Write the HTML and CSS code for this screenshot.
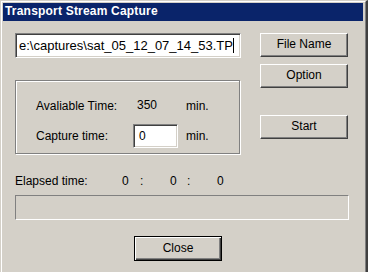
FILE: index.html
```html
<!DOCTYPE html>
<html lang="en">
  <head>
    <meta charset="utf-8">
    <title>Transport Stream Capture</title>
    <link rel="stylesheet" href="styles.css">
  </head>
  <body>
    <div class="window">
      <div class="frame">
        <div class="titlebar">Transport Stream Capture</div>

        <div class="client">
          <div class="toprow">
            <div class="leftcol">
              <div class="edit filename">e:\captures\sat_05_12_07_14_53.TP<span class="caret"></span></div>

              <div class="group">
                <div class="grow">
                  <span class="lbl">Avaliable Time:</span>
                  <span class="val">350</span>
                  <span class="unit">min.</span>
                </div>
                <div class="grow">
                  <span class="lbl">Capture time:</span>
                  <div class="edit small">0</div>
                  <span class="unit">min.</span>
                </div>
              </div>
            </div>

            <div class="rightcol">
              <div class="btn">File Name</div>
              <div class="btn option">Option</div>
              <div class="btn start">Start</div>
            </div>
          </div>

          <div class="elapsed">
            <span class="elabel">Elapsed time:</span>
            <span class="num n1">0</span>
            <span class="sep">:</span>
            <span class="num n2">0</span>
            <span class="sep">:</span>
            <span class="num n3">0</span>
          </div>

          <div class="progress"></div>

          <div class="bottom">
            <div class="btn default">Close</div>
          </div>
        </div>
      </div>
    </div>
  </body>
</html>
```

FILE: styles.css
```css
html, body
{
	margin: 0;
	padding: 0;
	background: #D4D0C8;
}
body
{
	font-family: "Liberation Sans", Arial, sans-serif;
	font-size: 12px;
	color: #000;
}
.window
{
	width: 368px;
	height: 272px;
	box-sizing: border-box;
	border-top: 1px solid #D4D0C8;
	border-left: 1px solid #D4D0C8;
	border-right: 2px solid #404040;
	overflow: hidden;
}
.frame
{
	height: 300px;
	border-top: 1px solid #FFF;
	border-left: 1px solid #FFF;
	border-right: 1px solid #808080;
	padding: 1px;
}
.titlebar
{
	height: 18px;
	background: #0A246A;
	color: #FFF;
	font-weight: bold;
	font-size: 12px;
	letter-spacing: 0.2px;
	line-height: 17px;
	padding-left: 2px;
	margin-right: 1px;
}
.client
{
	padding: 12px 0 0 12px;
}

.toprow
{
	display: flex;
}
.leftcol
{
	width: 226px;
}
.rightcol
{
	margin-left: 19px;
	display: flex;
	flex-direction: column;
}

.edit
{
	box-sizing: border-box;
	background: #FFF;
	border-top: 1px solid #808080;
	border-left: 1px solid #808080;
	border-bottom: 1px solid #FFF;
	border-right: 1px solid #FFF;
	box-shadow: inset 1px 1px 0 #404040, inset -1px -1px 0 #D4D0C8;
	white-space: nowrap;
	overflow: hidden;
}
.filename
{
	height: 25px;
	font-size: 13px;
	line-height: 23px;
	padding-left: 3px;
}
.caret
{
	display: inline-block;
	width: 1px;
	height: 15px;
	background: #000;
	vertical-align: -3px;
}
.small
{
	width: 45px;
	height: 24px;
	margin-left: -4px;
	padding: 4px 0 0 5px;
	line-height: 14px;
}

.group
{
	box-sizing: border-box;
	margin-top: 22px;
	width: 225px;
	height: 74px;
	border: 1px solid #808080;
	box-shadow: inset 1px 1px 0 #FFF, 1px 1px 0 #FFF;
	padding: 13px 0 0 20px;
}
.grow
{
	display: flex;
	align-items: center;
	height: 24px;
}
.grow + .grow
{
	margin-top: 6px;
}
.lbl
{
	width: 101px;
}
.val
{
	width: 49px;
	margin-top: -3px;
}
.grow .small + .unit
{
	margin-left: 8px;
}

.btn
{
	box-sizing: border-box;
	width: 88px;
	height: 24px;
	text-align: center;
	line-height: 21px;
	border-top: 1px solid #FFF;
	border-left: 1px solid #FFF;
	border-right: 1px solid #404040;
	border-bottom: 1px solid #404040;
	box-shadow: inset -1px -1px 0 #808080;
}
.option
{
	margin-top: 7px;
}
.start
{
	margin-top: 27px;
}

.elapsed
{
	margin-top: 20px;
	height: 14px;
	line-height: 14px;
	display: flex;
}
.elabel
{
	width: 107px;
}
.sep
{
	width: 30px;
}
.n1
{
	width: 18px;
}
.n2
{
	width: 17px;
}

.progress
{
	box-sizing: border-box;
	margin-top: 7px;
	width: 334px;
	height: 25px;
	border-top: 1px solid #808080;
	border-left: 1px solid #808080;
	border-bottom: 1px solid #FFF;
	border-right: 1px solid #FFF;
}

.bottom
{
	margin-top: 16px;
	padding-left: 119px;
}
.default
{
	width: 88px;
	height: 25px;
	border: 1px solid #000;
	box-shadow: inset 1px 1px 0 #FFF, inset -1px -1px 0 #404040, inset -2px -2px 0 #808080;
	line-height: 23px;
}
```
